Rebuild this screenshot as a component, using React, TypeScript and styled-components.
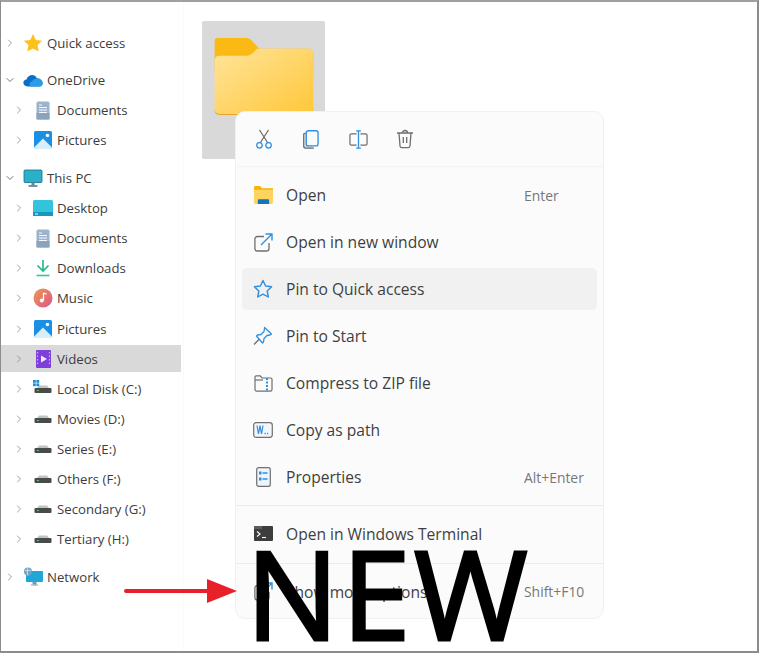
import React from 'react';
import styled, { createGlobalStyle } from 'styled-components';
import { ChevronRight, ChevronDown } from 'lucide-react';

const GlobalStyle = createGlobalStyle`
  html, body {
    margin: 0;
    padding: 0;
    background: #fff;
  }
  body {
    font-family: "Open Sans", "Noto Sans", "Liberation Sans", sans-serif;
  }
`;

const Frame = styled.div`
  position: relative;
  box-sizing: border-box;
  width: 759px;
  height: 653px;
  display: flex;
  background: #fff;
  border-top: 2px solid #a0a0a0;
  border-left: 1px solid #8c8c8c;
  border-right: 2px solid #8c8c8c;
  border-bottom: 2px solid #8c8c8c;
`;

const Sidebar = styled.nav`
  box-sizing: border-box;
  width: 183px;
  flex: none;
  padding-top: 25.6px;
  border-right: 1px solid #fafafa;
  display: flex;
  flex-direction: column;
  gap: 7.6px;
`;

const Group = styled.div`
  display: flex;
  flex-direction: column;
`;

const Row = styled.div<{ $child?: boolean }>`
  height: 30.08px;
  display: flex;
  align-items: center;
  padding-left: ${(p) => (p.$child ? 12 : 3)}px;
  font-size: 13.2px;
  color: #3c3c3c;
  white-space: nowrap;
`;

const SelectedWrap = styled.div`
  height: 30.08px;
  display: flex;
  align-items: center;
  margin-right: 2px;
`;

const SelectedBar = styled.div`
  height: 27px;
  width: 100%;
  background: #d9d9d9;
  display: flex;
  align-items: center;
  padding-left: 12px;
  font-size: 13.2px;
  color: #3c3c3c;
`;

const Caret = styled.span`
  width: 12px;
  flex: none;
  display: flex;
  justify-content: center;
  color: #808080;
`;

const NavIcon = styled.span<{ $child?: boolean }>`
  width: 22px;
  height: 22px;
  flex: none;
  margin-left: ${(p) => (p.$child ? 7 : 6)}px;
  margin-right: 3px;
  display: flex;
  align-items: center;
  justify-content: center;
`;

const Main = styled.main`
  flex: 1;
  padding: 19px 0 0 18px;
`;

const FolderTile = styled.div`
  width: 123px;
  height: 138px;
  background: #d9d9d9;
  border-radius: 2px;
  display: flex;
  justify-content: flex-start;
  padding: 17px 0 0 12px;
  box-sizing: border-box;
`;

const Menu = styled.div`
  position: absolute;
  left: 234px;
  top: 109px;
  width: 369px;
  height: 508px;
  box-sizing: border-box;
  background: #fbfbfb;
  border: 1px solid #f1f1f1;
  border-radius: 10px;
  display: flex;
  flex-direction: column;
  overflow: hidden;
`;

const Toolbar = styled.div`
  height: 54px;
  flex: none;
  display: flex;
  align-items: center;
  padding-left: 15px;
  gap: 21px;
  border-bottom: 1px solid #f3f3f3;
`;

const ToolButton = styled.span`
  width: 26px;
  height: 26px;
  display: flex;
  align-items: center;
  justify-content: center;
`;

const Items = styled.div`
  padding-top: 7px;
  display: flex;
  flex-direction: column;
  gap: 5px;
`;

const Item = styled.div<{ $hover?: boolean }>`
  height: 42px;
  margin: 0 6px;
  padding: 0 12px 0 7px;
  border-radius: 5px;
  display: flex;
  align-items: center;
  background: ${(p) => (p.$hover ? '#f1f1f1' : 'transparent')};
  color: #3f3f3f;
  font-size: 15.6px;
`;

const ItemIcon = styled.span`
  width: 28px;
  height: 28px;
  flex: none;
  margin-right: 9px;
  display: flex;
  align-items: center;
  justify-content: center;
`;

const ItemLabel = styled.span`
  flex: 1;
  white-space: nowrap;
`;

const Shortcut = styled.span`
  width: 61px;
  flex: none;
  font-size: 13.9px;
  color: #777;
  white-space: nowrap;
`;

const Divider = styled.div`
  height: 1px;
  background: #ececec;
  flex: none;
`;

const Spacer = styled.div`
  height: 7px;
  flex: none;
`;

const Section = styled.div`
  box-sizing: border-box;
  height: 57px;
  padding-bottom: 2px;
  flex: none;
  display: flex;
  flex-direction: column;
  justify-content: center;
`;

const BigNew = styled.div`
  position: absolute;
  left: 245px;
  top: 536px;
  font-family: "Open Sans", sans-serif;
  font-size: 123px;
  line-height: 0.9;
  letter-spacing: 3.5px;
  color: #000;
  -webkit-text-stroke: 3px #000;
`;

const Arrow = styled.svg`
  position: absolute;
  left: 122px;
  top: 574px;
`;

const BLUE = '#2f8fe0';
const GREY = '#6f6f6f';

const Star = () => (
  <svg width="20" height="20" viewBox="0 0 20 20">
    <path d="M10 1l2.8 5.9 6.4.8-4.7 4.4 1.2 6.4L10 15.4l-5.7 3.1 1.2-6.4L.8 7.7l6.4-.8z" fill="#fcc21b" />
  </svg>
);

const Cloud = () => (
  <svg width="20" height="13" viewBox="0 0 22 14">
    <path d="M5 13.500C2 13.500.4 11.600.4 9.600c0-2 1.500-3.500 3.400-3.700C4.800 2.800 7.400 1 10 1c2.500 0 4.600 1.500 5.400 3.800 3.400-.2 6.200 2.200 6.200 5.200 0 2-1.400 3.500-3.300 3.500z" fill="#0a6fc9" />
    <path d="M8 13.500c-1.500-2-.7-5 2-5.600C11.300 5.700 13.500 4.600 15.400 4.800c3.400-.2 6.200 2.200 6.200 5.200 0 2-1.400 3.500-3.300 3.500z" fill="#2a9be6" />
  </svg>
);

const DocIcon = () => (
  <svg width="14" height="19" viewBox="0 0 14 19">
    <rect x="0.500" y="0.500" width="13" height="18" rx="1.500" fill="#9db3cc" />
    <rect x="0.500" y="12" width="13" height="6.500" fill="#8ba3bf" />
    <path d="M3 4h3M3 6.500h8M3 9h8M3 11.500h8" stroke="#f4f7fb" strokeWidth="1" />
  </svg>
);

const PicIcon = () => (
  <svg width="18" height="18" viewBox="0 0 18 18">
    <rect width="18" height="18" rx="1.500" fill="#1a8fe3" />
    <path d="M0 16.500L9 7.500l9 9V18H0z" fill="#d8eefb" />
    <circle cx="13.500" cy="4.500" r="1.800" fill="#fff" />
  </svg>
);

const PcIcon = () => (
  <svg width="20" height="19" viewBox="0 0 20 19">
    <rect x="1" y="1" width="18" height="12.500" rx="1" fill="#2ab0c8" stroke="#156f8a" strokeWidth="0.800" />
    <path d="M8.500 13.500h3v3h-3z" fill="#5d8da0" />
    <path d="M5.500 17h9" stroke="#3e6b80" strokeWidth="1.400" />
  </svg>
);

const DesktopIcon = () => (
  <svg width="20" height="16" viewBox="0 0 20 16">
    <rect width="20" height="16" rx="1.500" fill="#35c3dc" />
    <rect y="12" width="20" height="4" fill="#1597c4" />
    <path d="M2 14h3" stroke="#e9fbff" strokeWidth="1" />
  </svg>
);

const DownloadIcon = () => (
  <svg width="16" height="18" viewBox="0 0 16 18">
    <path d="M8 1v10M2.500 6.500L8 12l5.500-5.500" fill="none" stroke="#1fb58a" strokeWidth="1.600" />
    <path d="M1.500 16.500h13" stroke="#35c4a2" strokeWidth="1.600" />
  </svg>
);

const MusicIcon = () => (
  <svg width="20" height="20" viewBox="0 0 20 20">
    <defs>
      <linearGradient id="mus" x1="0" y1="0" x2="1" y2="1">
        <stop offset="0" stopColor="#ee9a4e" />
        <stop offset="1" stopColor="#d9558f" />
      </linearGradient>
    </defs>
    <circle cx="10" cy="10" r="9.500" fill="url(#mus)" />
    <path d="M10.500 5v7" stroke="#fff" strokeWidth="1.300" />
    <path d="M10.500 5l3 1.200" stroke="#fff" strokeWidth="1.300" />
    <circle cx="8.800" cy="12.500" r="2" fill="#fff" />
  </svg>
);

const VideoIcon = () => (
  <svg width="15" height="18" viewBox="0 0 15 18">
    <rect width="15" height="18" rx="1" fill="#7e3fdb" />
    <path d="M5 5.500l6 3.500-6 3.500z" fill="#efe6ff" />
    <path d="M1.500 2v14M13.500 2v14" stroke="#c9aef5" strokeWidth="1.200" strokeDasharray="1.500 2" />
  </svg>
);

const DriveIcon = ({ windows }: { windows?: boolean }) => (
  <svg width="18" height="18" viewBox="0 0 18 18" overflow="visible">
    <path d="M3 8l2-2.500h8L15 8z" fill="#c3c3c3" />
    <rect x="0.500" y="8" width="17" height="5" rx="1" fill="#4a4a4a" />
    <path d="M3 10.500h2" stroke="#58c26a" strokeWidth="1" />
    {windows && (
      <g fill="#1b8ed8">
        <rect x="-1" y="0" width="2.800" height="2.800" />
        <rect x="2.400" y="0" width="2.800" height="2.800" />
        <rect x="-1" y="3.400" width="2.800" height="2.800" />
        <rect x="2.400" y="3.400" width="2.800" height="2.800" />
      </g>
    )}
  </svg>
);

const NetworkIcon = () => (
  <svg width="21" height="20" viewBox="0 0 21 20">
    <rect x="3" y="4" width="17" height="11" rx="1" fill="#22a6d8" />
    <path d="M10 15h3v2h-3zM8 18h7" stroke="#6a9db5" strokeWidth="1" fill="#6a9db5" />
    <circle cx="5" cy="4.500" r="4" fill="#6fa4c4" />
    <path d="M2 3c2 1 4 1 6 0M5 .5c-1 2-1 6 0 8" stroke="#e6f2fa" strokeWidth="0.800" fill="none" />
  </svg>
);

const LargeFolder = () => (
  <svg width="100" height="77" viewBox="0 0 100 78">
    <defs>
      <linearGradient id="fold" x1="0" y1="0" x2="1" y2="1">
        <stop offset="0" stopColor="#ffe49a" />
        <stop offset="1" stopColor="#ffc738" />
      </linearGradient>
    </defs>
    <path d="M3 0h29c3 0 4 1 6 3l7 8h50c3 0 5 2 5 5v20H0V3c0-2 1-3 3-3z" fill="#fbb914" />
    <path d="M0 23c0-3 2-5 5-5h27c3 0 5-1 7-3l4-4h52c3 0 5 2 5 5v57c0 3-2 5-5 5H5c-3 0-5-2-5-5z" fill="url(#fold)" />
    <path d="M0 72c0 3 2 5 5 5h90c3 0 5-2 5-5v1.500c0 2.500-2 4.500-5 4.500H5c-3 0-5-2-5-4.500z" fill="#e8a525" />
  </svg>
);

const Cut = () => (
  <svg width="18" height="20" viewBox="0 0 18 22">
    <path d="M4 1l9 14M14 1L5 15" stroke={GREY} strokeWidth="1.200" fill="none" />
    <circle cx="4" cy="18" r="3" stroke={BLUE} strokeWidth="1.400" fill="none" />
    <circle cx="14" cy="18" r="3" stroke={BLUE} strokeWidth="1.400" fill="none" />
  </svg>
);

const Copy = () => (
  <svg width="16" height="19" viewBox="0 0 17 20">
    <path d="M3 3.500H2c-.8 0-1.300.6-1.300 1.300V17c0 1.200.9 2.200 2.200 2.200h8.500" stroke={GREY} strokeWidth="1.300" fill="#dcdcdc" />
    <rect x="3.500" y="0.700" width="12.500" height="16" rx="2" stroke={BLUE} strokeWidth="1.400" fill="#fbfbfb" />
  </svg>
);

const Rename = () => (
  <svg width="19" height="19" viewBox="0 0 20 20">
    <path d="M8 4H2.500C1.500 4 1 4.600 1 5.500v9c0 .9.500 1.500 1.500 1.500H8M12 4h5.500c1 0 1.500.6 1.500 1.500v9c0 .9-.5 1.500-1.500 1.500H12" stroke={GREY} strokeWidth="1.300" fill="none" />
    <path d="M10 1.500v17M7.500 1h5M7.500 19h5" stroke={BLUE} strokeWidth="1.400" fill="none" />
  </svg>
);

const Trash = () => (
  <svg width="18" height="20" viewBox="0 0 18 20">
    <path d="M1 4h16M6.500 4c0-1.500 1-2.500 2.500-2.500s2.500 1 2.500 2.500M3 4l1 13c.1 1 .8 1.700 1.800 1.700h6.400c1 0 1.700-.7 1.800-1.700l1-13" stroke={GREY} strokeWidth="1.300" fill="none" />
    <path d="M7.300 8v6M10.700 8v6" stroke={GREY} strokeWidth="1.300" />
  </svg>
);

const OpenFolder = () => (
  <svg width="19" height="18" viewBox="0 0 20 19">
    <path d="M0 1.500C0 .7.600 0 1.400 0h5l2 2.500H20V5H0z" fill="#f7b500" />
    <path d="M0 4h20v13.500c0 .8-.6 1.500-1.400 1.500H1.400C.6 19 0 18.300 0 17.500z" fill="#ffd45e" />
    <path d="M4 19v-3.500c0-1 .7-1.500 1.500-1.500h9c.8 0 1.500.5 1.500 1.500V19z" fill="#1573b8" />
  </svg>
);

const NewWindow = () => (
  <svg width="19" height="19" viewBox="0 0 19 19">
    <path d="M10 3.500H3.500c-1.500 0-2.600 1.100-2.600 2.600v9.300c0 1.500 1.100 2.600 2.600 2.600h8.900c1.500 0 2.600-1.100 2.600-2.600V10" stroke={GREY} strokeWidth="1.300" fill="none" />
    <path d="M7 12L17.500 1.500M11.500 1H18v6.500" stroke={BLUE} strokeWidth="1.400" fill="none" />
  </svg>
);

const StarOutline = () => (
  <svg width="20" height="20" viewBox="0 0 20 20">
    <path d="M10 1.500l2.600 5.500 6 .8-4.400 4.200 1.100 6L10 15.100 4.700 18l1.100-6L1.400 7.800l6-.8z" stroke={BLUE} strokeWidth="1.400" fill="none" strokeLinejoin="round" />
  </svg>
);

const Pin = () => (
  <svg width="20" height="20" viewBox="0 0 20 20">
    <path d="M11.500 1.500l7 6.500-1.500 1-3 .5-3 3-.5 3.500-1 1L3.500 10l1-1 3.500-.5 3-3 .5-3z" stroke={BLUE} strokeWidth="1.300" fill="none" strokeLinejoin="round" />
    <path d="M6 13.500L1 18.500" stroke={GREY} strokeWidth="1.300" />
  </svg>
);

const Zip = () => (
  <svg width="19" height="17" viewBox="0 0 19 17">
    <path d="M1 14.500V2c0-.7.500-1.200 1.200-1.200h4L8 3h8.800c.7 0 1.200.5 1.200 1.200V14.500c0 .9-.7 1.600-1.600 1.600H2.600c-.9 0-1.600-.7-1.600-1.600z" stroke={GREY} strokeWidth="1.200" fill="none" />
    <path d="M1 5h8" stroke={GREY} strokeWidth="1.200" />
    <path d="M13 3v13" stroke={BLUE} strokeWidth="2" strokeDasharray="2 1.500" />
  </svg>
);

const CopyPath = () => (
  <svg width="20" height="16" viewBox="0 0 20 16">
    <rect x="0.700" y="0.700" width="18.600" height="14.600" rx="2.500" stroke={GREY} strokeWidth="1.200" fill="#f3f6fa" />
    <path d="M4 3.500l1.500 8.500L7 3.500l1.500 8.500L10 3.500" stroke={BLUE} strokeWidth="1.200" fill="none" />
    <path d="M11.500 11.500h1.200M14 11.500h1.200" stroke={BLUE} strokeWidth="1.400" />
  </svg>
);

const Props = () => (
  <svg width="15" height="20" viewBox="0 0 15 20">
    <rect x="0.700" y="0.700" width="13.600" height="18.600" rx="2" stroke={GREY} strokeWidth="1.200" fill="#eef4fb" />
    <path d="M6.500 6h5M6.500 12h5" stroke={BLUE} strokeWidth="1.400" />
    <rect x="3" y="4.500" width="2.500" height="3" fill={BLUE} />
    <rect x="3" y="10.500" width="2.500" height="3" fill={BLUE} />
  </svg>
);

const Terminal = () => (
  <svg width="19" height="15" viewBox="0 0 19 15">
    <rect width="19" height="15" rx="1" fill="#3d3d3d" />
    <rect width="8" height="3" fill="#5d5d5d" />
    <path d="M3 5.500L6 8l-3 2.500" stroke="#fff" strokeWidth="1.100" fill="none" />
    <path d="M8 11.500h4" stroke="#fff" strokeWidth="1.100" />
  </svg>
);

type NavRow = { label: string; icon: React.ReactNode; child?: boolean; open?: boolean; selected?: boolean };

const navGroups: NavRow[][] = [
  [{ label: 'Quick access', icon: <Star /> }],
  [
    { label: 'OneDrive', icon: <Cloud />, open: true },
    { label: 'Documents', icon: <DocIcon />, child: true },
    { label: 'Pictures', icon: <PicIcon />, child: true },
  ],
  [
    { label: 'This PC', icon: <PcIcon />, open: true },
    { label: 'Desktop', icon: <DesktopIcon />, child: true },
    { label: 'Documents', icon: <DocIcon />, child: true },
    { label: 'Downloads', icon: <DownloadIcon />, child: true },
    { label: 'Music', icon: <MusicIcon />, child: true },
    { label: 'Pictures', icon: <PicIcon />, child: true },
    { label: 'Videos', icon: <VideoIcon />, child: true, selected: true },
    { label: 'Local Disk (C:)', icon: <DriveIcon windows />, child: true },
    { label: 'Movies (D:)', icon: <DriveIcon />, child: true },
    { label: 'Series (E:)', icon: <DriveIcon />, child: true },
    { label: 'Others (F:)', icon: <DriveIcon />, child: true },
    { label: 'Secondary (G:)', icon: <DriveIcon />, child: true },
    { label: 'Tertiary (H:)', icon: <DriveIcon />, child: true },
  ],
  [{ label: 'Network', icon: <NetworkIcon /> }],
];

type MenuRow = { label: string; icon: React.ReactNode; shortcut?: string; hover?: boolean };

const menuRows: MenuRow[] = [
  { label: 'Open', icon: <OpenFolder />, shortcut: 'Enter' },
  { label: 'Open in new window', icon: <NewWindow /> },
  { label: 'Pin to Quick access', icon: <StarOutline />, hover: true },
  { label: 'Pin to Start', icon: <Pin /> },
  { label: 'Compress to ZIP file', icon: <Zip /> },
  { label: 'Copy as path', icon: <CopyPath /> },
  { label: 'Properties', icon: <Props />, shortcut: 'Alt+Enter' },
];

const NavItem = ({ row }: { row: NavRow }) => {
  const inner = (
    <>
      <Caret>{row.open ? <ChevronDown size={16} strokeWidth={1.5} color="#444" /> : <ChevronRight size={16} strokeWidth={1.5} />}</Caret>
      <NavIcon $child={row.child}>{row.icon}</NavIcon>
      {row.label}
    </>
  );
  if (row.selected) {
    return (
      <SelectedWrap>
        <SelectedBar>{inner}</SelectedBar>
      </SelectedWrap>
    );
  }
  return <Row $child={row.child}>{inner}</Row>;
};

const App = () => (
  <Frame>
    <GlobalStyle />
    <Sidebar>
      {navGroups.map((group, i) => (
        <Group key={i}>
          {group.map((row) => (
            <NavItem key={row.label} row={row} />
          ))}
        </Group>
      ))}
    </Sidebar>
    <Main>
      <FolderTile>
        <LargeFolder />
      </FolderTile>
    </Main>
    <Menu>
      <Toolbar>
        <ToolButton><Cut /></ToolButton>
        <ToolButton><Copy /></ToolButton>
        <ToolButton><Rename /></ToolButton>
        <ToolButton><Trash /></ToolButton>
      </Toolbar>
      <Items>
        {menuRows.map((row) => (
          <Item key={row.label} $hover={row.hover}>
            <ItemIcon>{row.icon}</ItemIcon>
            <ItemLabel>{row.label}</ItemLabel>
            {row.shortcut && <Shortcut>{row.shortcut}</Shortcut>}
          </Item>
        ))}
      </Items>
      <Spacer />
      <Divider />
      <Section>
        <Item>
          <ItemIcon><Terminal /></ItemIcon>
          <ItemLabel>Open in Windows Terminal</ItemLabel>
        </Item>
      </Section>
      <Divider />
      <Section>
        <Item>
          <ItemIcon><NewWindow /></ItemIcon>
          <ItemLabel>Show more options</ItemLabel>
          <Shortcut>Shift+F10</Shortcut>
        </Item>
      </Section>
    </Menu>
    <Arrow width="116" height="30" viewBox="0 0 116 30">
      <path d="M3 15h84" stroke="#e8202a" strokeWidth="4" strokeLinecap="round" />
      <path d="M84 3l30 12-30 12z" fill="#e8202a" />
    </Arrow>
    <BigNew>NEW</BigNew>
  </Frame>
);

export default App;
